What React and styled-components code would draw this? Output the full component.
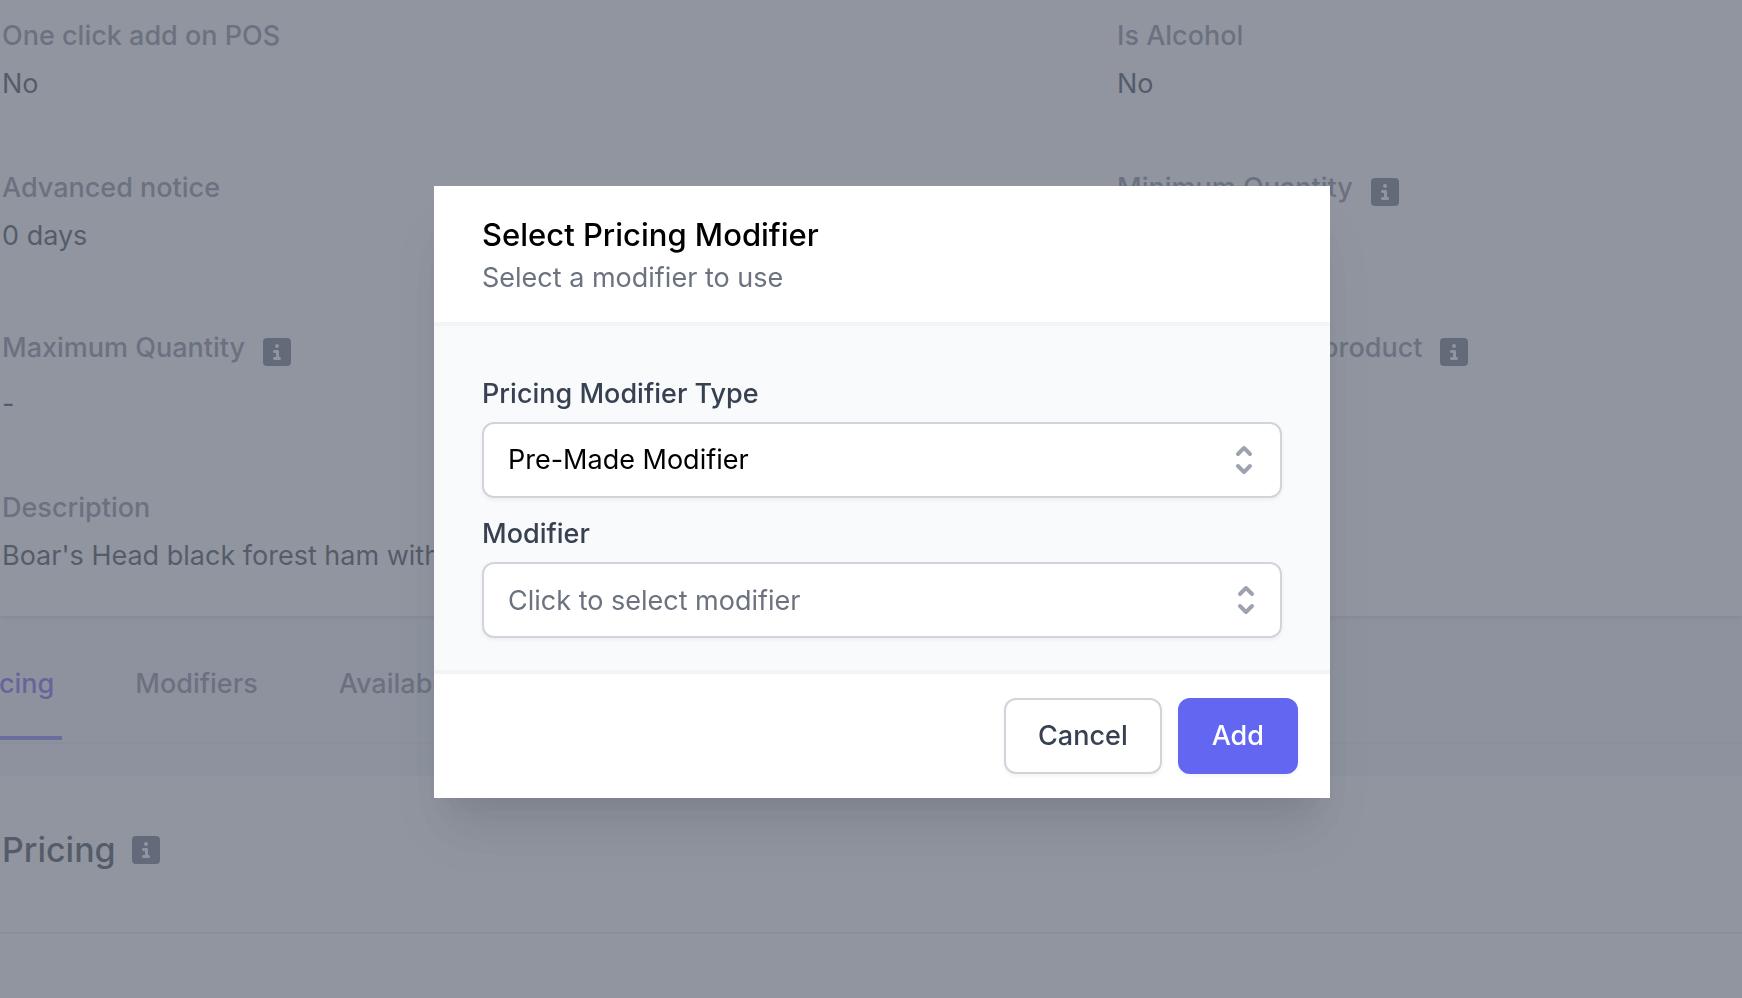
import React from 'react';
import styled, { createGlobalStyle } from 'styled-components';

const GlobalStyle = createGlobalStyle`
    * {
        box-sizing: border-box;
    }

    body {
        margin: 0;
        background-color: #f3f4f6;
        font-family: Inter, 'Liberation Sans', sans-serif;
        font-size: 27px;
        line-height: 40px;
        color: #111827;
        overflow: hidden;
    }
`;

const Page = styled.main`
    min-height: 100vh;
    display: flex;
    flex-direction: column;
    overflow: hidden;
`;

const Details = styled.dl`
    margin: 0;
    padding: 16px 0 40px 2px;
    display: grid;
    grid-template-columns: 16fr 9fr;
    gap: 64px 4px;
    background-color: #fff;
    box-shadow: 0 2px 6px rgba(0, 0, 0, 0.1), 0 2px 4px rgba(0, 0, 0, 0.06);
`;

const Detail = styled.div`
    display: flex;
    flex-direction: column;
    gap: 8px;
    grid-column: ${({ $wide }) => ($wide ? '1 / -1' : 'auto')};
`;

const Term = styled.dt`
    display: flex;
    align-items: flex-start;
    gap: 18px;
    min-height: ${({ $tall }) => ($tall ? '48px' : '40px')};
    font-weight: 500;
    color: #6b7280;
`;

const Value = styled.dd`
    margin: 0;
`;

const InfoSvg = styled.svg`
    width: 28px;
    height: 28px;
    flex: none;
    fill: #4b5563;
`;

const TermInfo = styled.span`
    display: flex;
    padding-top: 10px;
`;

const Tabs = styled.nav`
    display: flex;
    gap: 65px;
    height: 128px;
    margin-left: -44px;
    padding-bottom: 2px;
    border-bottom: 2px solid #e5e7eb;
`;

const Tab = styled.a`
    padding: 48px 8px 32px;
    border-bottom: 4px solid ${({ $active }) => ($active ? '#6366f1' : 'transparent')};
    color: ${({ $active }) => ($active ? '#4f46e5' : '#6b7280')};
    font-weight: 500;
    text-decoration: none;
`;

const Panel = styled.section`
    flex: 1;
    margin-top: 32px;
    background-color: #fff;
    box-shadow: 0 0 2px rgba(0, 0, 0, 0.1);
`;

const PanelHeader = styled.div`
    display: flex;
    align-items: center;
    gap: 16px;
    padding: 46px 2px 54px;
    border-bottom: 2px solid #e5e7eb;
`;

const PanelTitle = styled.h2`
    margin: 0;
    font-size: 34px;
    line-height: 56px;
    font-weight: 500;
`;

const Overlay = styled.div`
    position: fixed;
    inset: 0;
    display: flex;
    align-items: center;
    justify-content: center;
    padding: 0 0 14px 22px;
    background-color: rgba(107, 114, 128, 0.75);
`;

const Modal = styled.form`
    width: 100%;
    max-width: 896px;
    background-color: #fff;
    box-shadow: 0 40px 50px -10px rgba(0, 0, 0, 0.1), 0 20px 20px -10px rgba(0, 0, 0, 0.04);
`;

const ModalHeader = styled.header`
    padding: 26px 48px 24px;
    border-bottom: 4px solid #f3f4f6;
`;

const ModalTitle = styled.h1`
    margin: 0;
    font-size: 31px;
    line-height: 46px;
    font-weight: 500;
    color: #000;
`;

const ModalSubtitle = styled.p`
    margin: 0;
    color: #6b7280;
`;

const ModalBody = styled.div`
    display: flex;
    flex-direction: column;
    gap: 16px;
    padding: 48px 48px 32px;
    background-color: #f9fafb;
`;

const Field = styled.div`
    display: flex;
    flex-direction: column;
    gap: 8px;
`;

const Label = styled.label`
    font-weight: 500;
    color: #374151;
`;

const Control = styled.div`
    position: relative;
    height: 76px;

    select,
    input {
        appearance: none;
        width: 100%;
        height: 100%;
        margin: 0;
        padding: 0 80px 0 24px;
        border: 2px solid #d1d5db;
        border-radius: 12px;
        background-color: #fff;
        box-shadow: 0 2px 4px rgba(0, 0, 0, 0.05);
        font: inherit;
        color: #000;
    }

    input::placeholder {
        color: #6b7280;
        opacity: 1;
    }
`;

const SelectorSvg = styled.svg`
    position: absolute;
    top: 18px;
    right: ${({ $right }) => $right}px;
    width: 40px;
    height: 40px;
    fill: #9ca3af;
    pointer-events: none;
`;

const ModalFooter = styled.footer`
    display: flex;
    justify-content: flex-end;
    gap: 16px;
    padding: 24px 32px;
    border-top: 4px solid #f3f4f6;
`;

const Button = styled.button`
    height: 76px;
    padding: 0 32px;
    border: 2px solid ${({ $primary }) => ($primary ? '#6366f1' : '#d1d5db')};
    border-radius: 12px;
    background-color: ${({ $primary }) => ($primary ? '#6366f1' : '#fff')};
    box-shadow: 0 2px 4px rgba(0, 0, 0, 0.05);
    color: ${({ $primary }) => ($primary ? '#fff' : '#374151')};
    font: inherit;
    font-weight: 500;
    cursor: pointer;
`;

const InfoIcon = () => (
    <InfoSvg viewBox="0 0 448 448" aria-hidden="true">
        <path
            fillRule="evenodd"
            d="M64 0h320a64 64 0 0 1 64 64v320a64 64 0 0 1-64 64H64a64 64 0 0 1-64-64V64A64 64 0 0 1 64 0zM184 304h24v-64h-24c-13.300 0-24-10.700-24-24s10.700-24 24-24h48c13.300 0 24 10.700 24 24v88h8c13.300 0 24 10.700 24 24s-10.700 24-24 24h-80c-13.300 0-24-10.700-24-24s10.700-24 24-24zM224 96a32 32 0 1 1 0 64 32 32 0 1 1 0-64z"
        />
    </InfoSvg>
);

const SelectorIcon = ({ right }) => (
    <SelectorSvg viewBox="0 0 20 20" $right={right} aria-hidden="true">
        <path
            fillRule="evenodd"
            clipRule="evenodd"
            d="M10 3a1 1 0 01.707.293l3 3a1 1 0 01-1.414 1.414L10 5.414 7.707 7.707a1 1 0 01-1.414-1.414l3-3A1 1 0 0110 3zm-3.707 9.293a1 1 0 011.414 0L10 14.586l2.293-2.293a1 1 0 011.414 1.414l-3 3a1 1 0 01-1.414 0l-3-3a1 1 0 010-1.414z"
        />
    </SelectorSvg>
);

const details = [
    { term: 'One click add on POS', value: 'No' },
    { term: 'Is Alcohol', value: 'No' },
    { term: 'Advanced notice', value: '0 days' },
    { term: 'Minimum Quantity', value: '1', info: true },
    { term: 'Maximum Quantity', value: '-', info: true },
    { term: 'Is featured as a product', value: 'No', info: true },
    { term: 'Description', value: "Boar's Head black forest ham with cheese", wide: true },
];

const App = () => {
    return (
        <>
            <GlobalStyle />
            <Page>
                <Details>
                    {details.map(({ term, value, info, wide }) => (
                        <Detail key={term} $wide={wide}>
                            <Term $tall={info}>
                                {term}
                                {info && <TermInfo><InfoIcon /></TermInfo>}
                            </Term>
                            <Value>{value}</Value>
                        </Detail>
                    ))}
                </Details>
                <Tabs>
                    <Tab href="#pricing" $active>Pricing</Tab>
                    <Tab href="#modifiers">Modifiers</Tab>
                    <Tab href="#availability">Availability</Tab>
                </Tabs>
                <Panel>
                    <PanelHeader>
                        <PanelTitle>Pricing</PanelTitle>
                        <InfoIcon />
                    </PanelHeader>
                </Panel>
            </Page>
            <Overlay>
                <Modal role="dialog" aria-labelledby="modal-title" onSubmit={(e) => e.preventDefault()}>
                    <ModalHeader>
                        <ModalTitle id="modal-title">Select Pricing Modifier</ModalTitle>
                        <ModalSubtitle>Select a modifier to use</ModalSubtitle>
                    </ModalHeader>
                    <ModalBody>
                        <Field>
                            <Label htmlFor="modifier-type">Pricing Modifier Type</Label>
                            <Control>
                                <select id="modifier-type" defaultValue="premade">
                                    <option value="premade">Pre-Made Modifier</option>
                                </select>
                                <SelectorIcon right={18} />
                            </Control>
                        </Field>
                        <Field>
                            <Label htmlFor="modifier">Modifier</Label>
                            <Control>
                                <input id="modifier" type="text" placeholder="Click to select modifier" />
                                <SelectorIcon right={16} />
                            </Control>
                        </Field>
                    </ModalBody>
                    <ModalFooter>
                        <Button type="button">Cancel</Button>
                        <Button type="submit" $primary>Add</Button>
                    </ModalFooter>
                </Modal>
            </Overlay>
        </>
    );
};

export default App;
